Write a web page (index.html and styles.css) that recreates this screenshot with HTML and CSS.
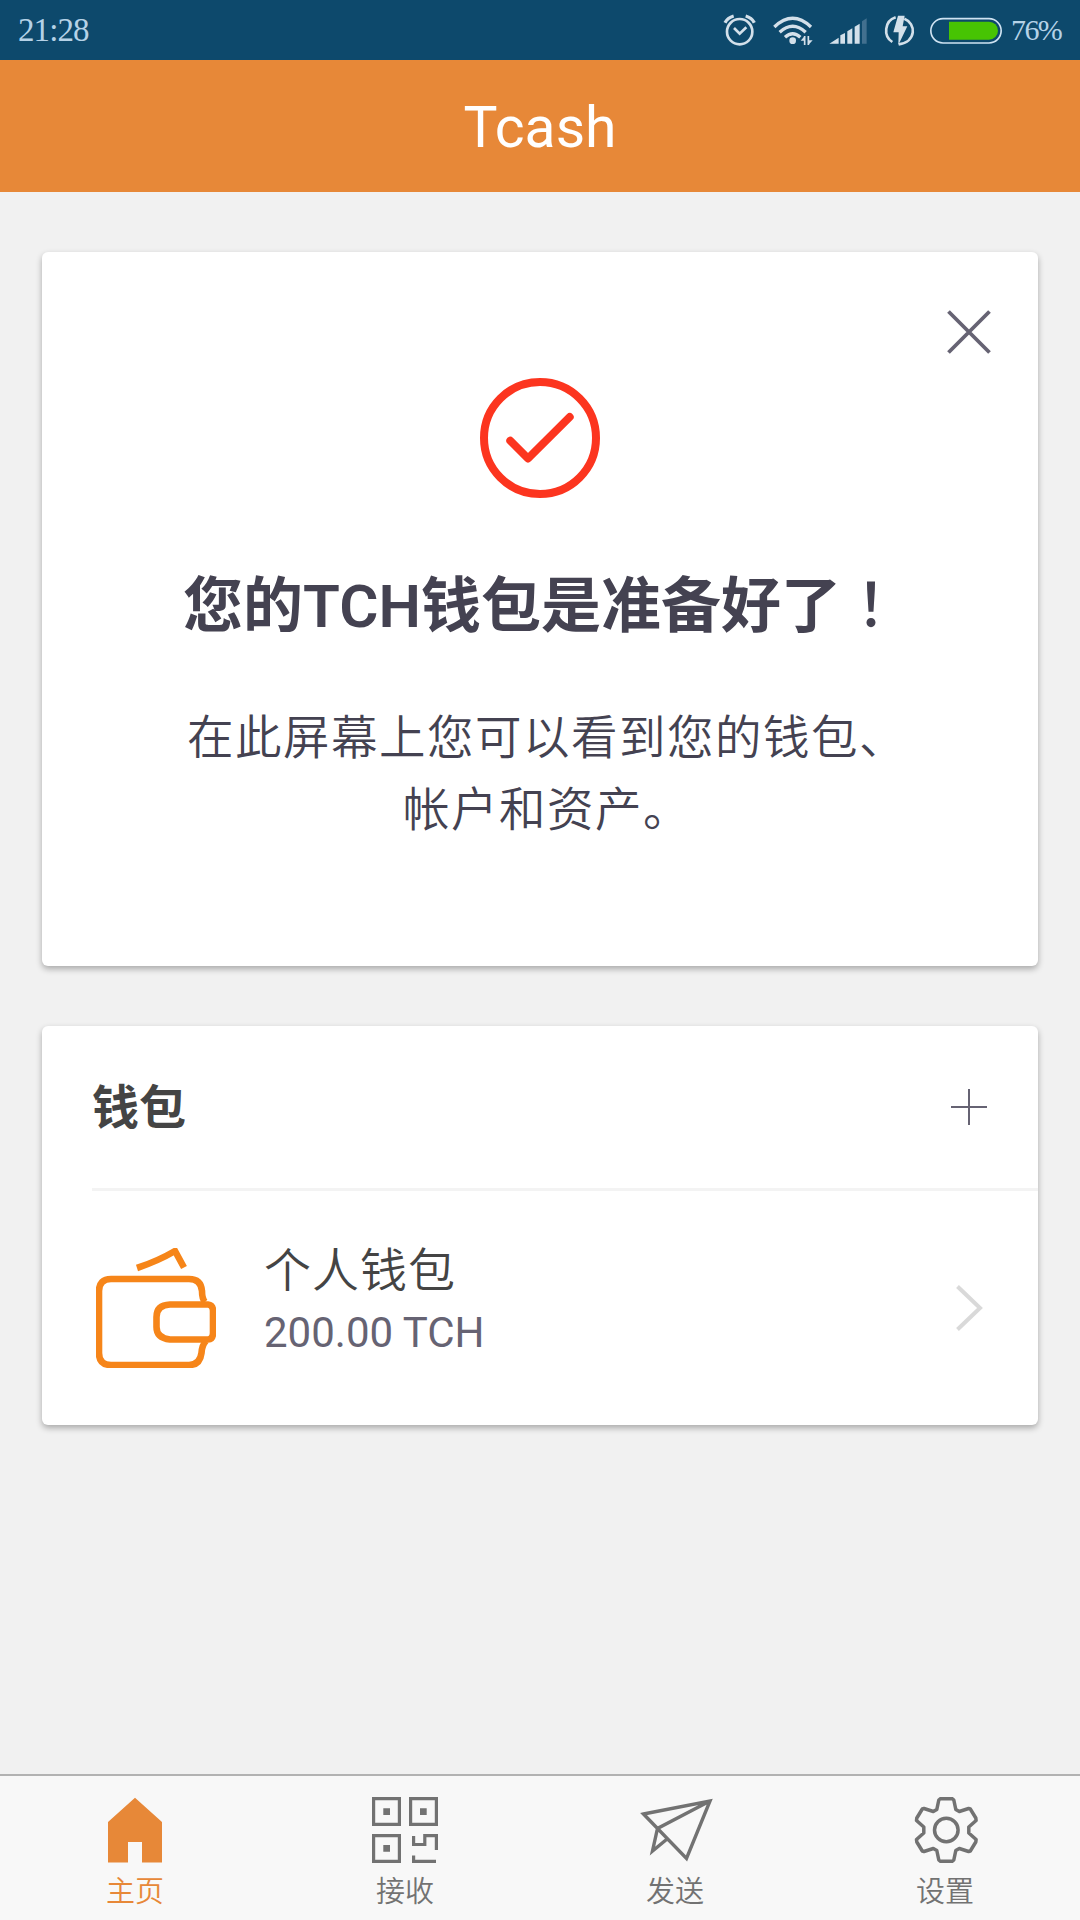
FILE: index.html
```html
<!DOCTYPE html>
<html lang="zh-CN">
<head>
<meta charset="utf-8">
<title>Tcash</title>
<link rel="stylesheet" href="styles.css">
</head>
<body>
<div class="app">
  <div class="status">
    <span class="clock">21:28</span>
    <div class="status-icons">
      <svg width="34" height="32" viewBox="70 40 102 96" fill="none" stroke="#d3e0ea" stroke-width="8">
        <circle cx="120" cy="93" r="38"/><path d="M103 82l17 17 20-19"/><path d="M76 66q8-15 26-20M164 66q-8-15-26-20" stroke-width="10"/>
      </svg>
      <svg width="40" height="32" viewBox="220 40 120 96" fill="none" stroke="#d3e0ea" stroke-width="10">
        <path d="M224 79Q279 27 334 79M240 95Q279 59 318 95M256 110Q279 89 302 110"/>
        <circle cx="279" cy="120" r="10" fill="#d3e0ea" stroke="none"/>
        <path d="M315 133V106M326 106V133" stroke-width="5"/><path d="M303 120l12-14v14zM339 119l-13 14v-14z" fill="#d3e0ea" stroke="none"/>
      </svg>
      <svg width="38.667" height="32" viewBox="388 40 116 96" fill="#d3e0ea">
        <path d="M389 129l28-18v18zM422 104l14-7v32h-14zM443 92l15-9v46h-15zM465 78l15-9v60h-15z"/>
        <path d="M487 62l14-9v76h-14z" fill="#42708f"/>
      </svg>
      <svg class="spill" width="30" height="32" viewBox="552 40 90 96" fill="none" stroke="#d3e0ea" stroke-width="8">
        <path d="M587 50C553 61 549 106 577 124M613 54C649 68 650 124 596 131"/>
        <path d="M594 45h20l-6 32h14l-27 56 1-38h-16z" fill="#d3e0ea" stroke="none"/>
      </svg>
      <svg width="72" height="32" viewBox="690 40 216 96">
        <rect x="692.5" y="54" width="211" height="73" rx="36.5" fill="none" stroke="#cfe3f2" stroke-width="5"/>
        <path d="M747 63h120a27 27 0 0 1 0 54H747z" fill="#47c403"/>
      </svg>
    </div>
    <span class="percent">76%</span>
  </div>
  <header class="header">Tcash</header>
  <main class="content">
    <section class="card notice">
      <svg class="close" width="44" height="44" viewBox="0 0 44 44" fill="none" stroke="#666373" stroke-width="3.8"><path d="M1.500 1.500l41 41M42.500 1.500l-41 41"/></svg>
      <svg width="120" height="120" viewBox="0 0 120 120" fill="none" stroke="#fc351f" stroke-width="8" stroke-linecap="round" stroke-linejoin="round">
        <circle cx="60" cy="60" r="56"/><path d="M30.3 62.7L48 80.5 89.7 39"/>
      </svg>
      <h1 class="notice-title">您的TCH钱包是准备好了<span class="mark" lang="zh-TW">！</span></h1>
      <p class="notice-text">在此屏幕上您可以看到您的钱包、<br>帐户和资产。</p>
    </section>
    <section class="card wallets">
      <div class="wallets-head">
        <h2 class="wallets-title">钱包</h2>
        <svg width="36" height="36" viewBox="0 0 36 36" stroke="#666373" stroke-width="2"><path d="M0 18h36M18 0v36"/></svg>
      </div>
      <div class="wallet">
        <svg width="120" height="120" viewBox="0 0 120 120" fill="none" stroke="#f68519" stroke-width="6.6">
          <path d="M41 20Q62 13 79 3L88 19.5"/>
          <path d="M109 54Q106 51 106 43Q105 31 93 31H15Q3 31 3 43V105Q3 117 15 117H93Q104 117 105.500 105Q106 97 110 93"/>
          <path d="M74 56.500H112Q117 57 117 63V85Q117 91 112 91.500H74Q60.500 90 60.500 79V69Q60.500 57 74 56.500Z"/>
        </svg>
        <div class="wallet-info">
          <span class="wallet-name">个人钱包</span>
          <span class="wallet-balance">200.00 TCH</span>
        </div>
        <svg width="27" height="46" viewBox="0 0 27 46" fill="none" stroke="#d9d9d9" stroke-width="4"><path d="M1.500 1.500l22.500 21.500-22.500 21.500"/></svg>
      </div>
    </section>
  </main>
  <nav class="tabs">
    <div class="tab active">
      <svg width="66" height="66" viewBox="0 0 66 66" fill="currentColor"><path d="M33 .8L60 25v40.500H40V45H26v20.500H6V25z"/></svg>
      <span>主页</span>
    </div>
    <div class="tab">
      <svg width="66" height="66" viewBox="0 0 66 66" fill="none" stroke="currentColor" stroke-width="3.2">
        <path d="M1.600 1.600h25.800v25.800H1.600zM38.600 1.600h25.800v25.800H38.600zM1.600 38.600h25.800v25.800H1.600zM41.600 39v8.500h11.200v-8.900h11.600V53M41.600 58.500v5.900H64"/>
        <path d="M11.300 11.300H18V18h-6.700zM48 11.300h6.700V18H48zM11.300 48H18v6.700h-6.700z" fill="currentColor" stroke="none"/>
      </svg>
      <span>接收</span>
    </div>
    <div class="tab">
      <svg class="spill" width="66" height="66" viewBox="0 0 66 66" fill="none" stroke="currentColor" stroke-width="3.4">
        <path d="M1.500 17L68 4 44.500 61.500zM68 4L15.500 31.500 10.500 54 24.500 42.500"/>
      </svg>
      <span>发送</span>
    </div>
    <div class="tab">
      <svg width="66" height="66" viewBox="-34.3 -33 66 66" fill="none" stroke="currentColor" stroke-width="3.500" stroke-linejoin="round">
        <path d="M-6-31.300H6L7.500-30 9.500-20.500 13-18.500 22.300-21.500 24-21 29.500-12 29.800-9.500 22.500-3V3L29.800 9.500 29.500 12 24 21 22.300 21.500 13 18.500 9.500 20.500 7.500 30 6 31.300H-6L-7.500 30-9.500 20.500-13 18.500-22.300 21.500-24 21-29.500 12-29.800 9.500-22.500 3V-3L-29.800-9.500-29.500-12-24-21-22.300-21.500-13-18.500-9.500-20.500-7.500-30Z"/>
        <circle r="11.800"/>
      </svg>
      <span>设置</span>
    </div>
  </nav>
</div>
</body>
</html>
```
FILE: styles.css
```css
* {
  box-sizing: border-box;
}

body {
  margin: 0;
  font-family: Roboto, "Noto Sans CJK SC", sans-serif;
}

svg {
  display: block;
  flex: none;
}

h1,
h2,
p {
  margin: 0;
}

.app {
  display: flex;
  flex-direction: column;
  width: 1080px;
  height: 1920px;
  background: #f1f1f1;
}

.status {
  display: flex;
  align-items: center;
  height: 60px;
  padding: 0 18px;
  background: #0d496c;
  color: #b5d2e7;
  font-family: "Liberation Serif", serif;
  font-size: 33px;
  line-height: 60px;
}

.clock {
  letter-spacing: -0.9px;
}

.status-icons {
  display: flex;
  gap: 16px;
  margin-left: auto;
}

.spill {
  overflow: visible;
}

.percent {
  width: 51px;
  margin-left: 9px;
  font-size: 30px;
  letter-spacing: -1.6px;
  white-space: nowrap;
}

.header {
  height: 132px;
  background: #e78838;
  color: #fff;
  font-size: 57px;
  line-height: 136px;
  text-align: center;
}

.content {
  display: flex;
  flex: 1;
  flex-direction: column;
  gap: 60px;
  padding: 60px 42px 0;
}

.card {
  border-radius: 6px;
  background: #fff;
  box-shadow: 0 3px 6px rgba(0, 0, 0, 0.3);
}

.notice {
  position: relative;
  display: flex;
  flex-direction: column;
  align-items: center;
  height: 714px;
  padding-top: 126px;
  color: #444251;
}

.close {
  position: absolute;
  top: 58px;
  right: 47px;
}

.notice-title {
  height: 72px;
  margin-top: 73px;
  padding-left: 4px;
  font-size: 60px;
  font-weight: 600;
  line-height: 72px;
}

.mark {
  font-family: Roboto, "Noto Sans CJK TC", sans-serif;
  font-weight: 500;
}

.notice-text {
  margin-top: 59px;
  padding-left: 14px;
  font-size: 46.5px;
  font-weight: 350;
  letter-spacing: 1.5px;
  line-height: 72px;
  text-align: center;
}

.wallets {
  height: 399px;
}

.wallets-head {
  display: flex;
  align-items: center;
  justify-content: space-between;
  height: 165px;
  padding: 0 51px 3px 50px;
  background: linear-gradient(#f3f3f3, #f3f3f3) right bottom / 946px 3px no-repeat;
}

.wallets-title {
  padding-top: 1px;
  color: #444;
  font-size: 47px;
  font-weight: 700;
  line-height: 72px;
}

.wallet {
  display: flex;
  align-items: center;
  height: 234px;
  padding: 0 55px 0 54px;
}

.wallet-info {
  display: flex;
  flex: 1;
  flex-direction: column;
  margin-left: 48px;
  padding-bottom: 18px;
}

.wallet-name {
  color: #444;
  font-size: 47px;
  font-weight: 350;
  letter-spacing: 1px;
  line-height: 68px;
}

.wallet-balance {
  color: #666373;
  font-size: 42px;
  line-height: 56px;
}

.tabs {
  display: flex;
  height: 146px;
  border-top: 2px solid #b2b2b2;
  background: #f8f8f8;
  color: #727272;
}

.tab {
  display: flex;
  flex: 1;
  flex-direction: column;
  align-items: center;
  padding-top: 21px;
  font-size: 29px;
  font-weight: 350;
  line-height: 40px;
}

.tab span {
  margin-top: 9px;
}

.active {
  color: #e78838;
}
```
